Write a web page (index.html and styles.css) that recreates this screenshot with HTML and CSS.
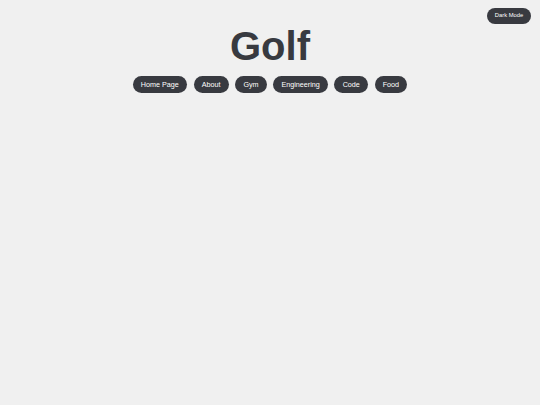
FILE: index.html
```html
<!DOCTYPE html>
<html lang="en">
<head>
    <meta charset="UTF-8">
    <meta name="viewport" content="width=device-width, initial-scale=1.0">
    <title>Golf</title>
    <link rel="stylesheet" href="styles.css">
</head>
<body>
    <div class="top-bar">
        <button class="mode-btn">Dark Mode</button>
    </div>
    <h1 class="title">Golf</h1>
    <nav class="nav">
        <a class="nav-btn" href="#">Home Page</a>
        <a class="nav-btn" href="#">About</a>
        <a class="nav-btn" href="#">Gym</a>
        <a class="nav-btn" href="#">Engineering</a>
        <a class="nav-btn" href="#">Code</a>
        <a class="nav-btn" href="#">Food</a>
    </nav>
</body>
</html>
```

FILE: styles.css
```css
*,
*::after,
*::before{
    padding: 0;
    margin: 0;
    box-sizing: border-box;
}
html{
    font: normal 16px/1.5 "Liberation Sans", Arial, sans-serif;
}
body{
    background-color: #f0f0f0;
    color: #383a40;
    min-height: 405px;
}
.top-bar{
    display: flex;
    justify-content: flex-end;
    padding: 8px 9px 0 0;
    height: 24px;
}
.mode-btn{
    font: normal 5.8px/1 "Liberation Sans", Arial, sans-serif;
    color: #fff;
    background-color: #383a40;
    border: none;
    border-radius: 8px;
    width: 44px;
    height: 16px;
    cursor: pointer;
}
.title{
    text-align: center;
    font-size: 40px;
    line-height: 1;
    font-weight: bold;
    padding-top: 1.5px;
    height: 48px;
}
.nav{
    display: flex;
    justify-content: center;
    gap: 6.5px;
    margin-top: 4px;
}
.nav-btn{
    font-size: 7.2px;
    line-height: 17px;
    height: 17px;
    padding: 0 8.2px;
    color: #fff;
    background-color: #383a40;
    border-radius: 9px;
    text-decoration: none;
}
```
